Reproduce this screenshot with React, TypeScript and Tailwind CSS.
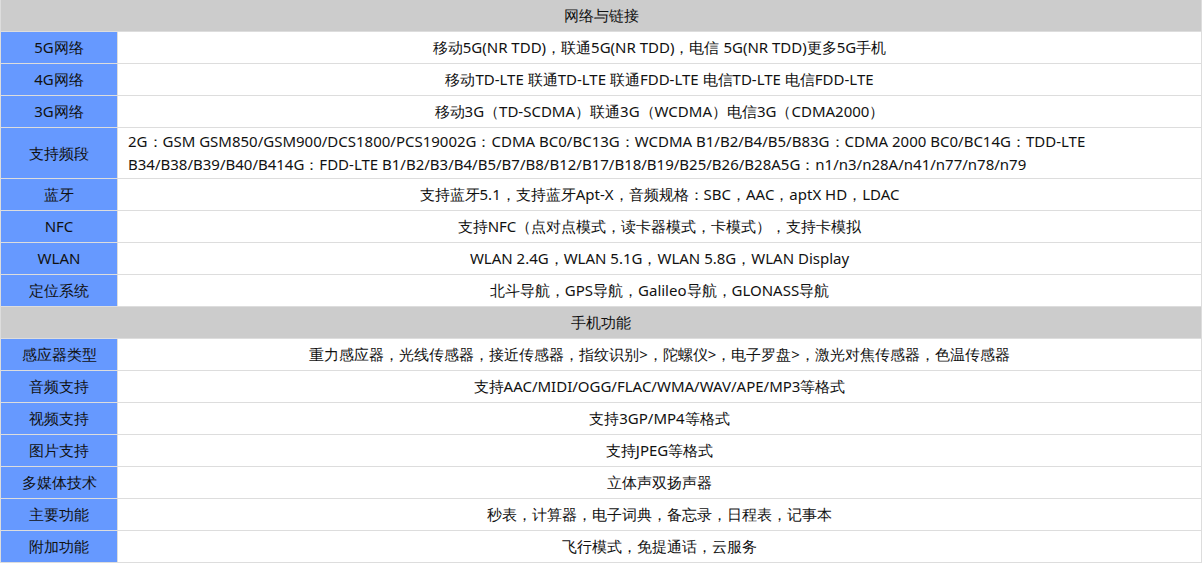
const sec1: [string, string][] = [
  ["5G网络", "移动5G(NR TDD)，联通5G(NR TDD)，电信 5G(NR TDD)更多5G手机"],
  ["4G网络", "移动TD-LTE 联通TD-LTE 联通FDD-LTE 电信TD-LTE 电信FDD-LTE"],
  ["3G网络", "移动3G（TD-SCDMA）联通3G（WCDMA）电信3G（CDMA2000）"],
  [
    "支持频段",
    "2G：GSM GSM850/GSM900/DCS1800/PCS19002G：CDMA BC0/BC13G：WCDMA B1/B2/B4/B5/B83G：CDMA 2000 BC0/BC14G：TDD-LTE B34/B38/B39/B40/B414G：FDD-LTE B1/B2/B3/B4/B5/B7/B8/B12/B17/B18/B19/B25/B26/B28A5G：n1/n3/n28A/n41/n77/n78/n79",
  ],
  ["蓝牙", "支持蓝牙5.1，支持蓝牙Apt-X，音频规格：SBC，AAC，aptX HD，LDAC"],
  ["NFC", "支持NFC（点对点模式，读卡器模式，卡模式），支持卡模拟"],
  ["WLAN", "WLAN 2.4G，WLAN 5.1G，WLAN 5.8G，WLAN Display"],
  ["定位系统", "北斗导航，GPS导航，Galileo导航，GLONASS导航"],
];
const sec2: [string, string][] = [
  ["感应器类型", "重力感应器，光线传感器，接近传感器，指纹识别>，陀螺仪>，电子罗盘>，激光对焦传感器，色温传感器"],
  ["音频支持", "支持AAC/MIDI/OGG/FLAC/WMA/WAV/APE/MP3等格式"],
  ["视频支持", "支持3GP/MP4等格式"],
  ["图片支持", "支持JPEG等格式"],
  ["多媒体技术", "立体声双扬声器"],
  ["主要功能", "秒表，计算器，电子词典，备忘录，日程表，记事本"],
  ["附加功能", "飞行模式，免提通话，云服务"],
];

function Rows({ rows }: { rows: [string, string][] }) {
  return (
    <>
      {rows.map(([k, v]) => (
        <tr key={k}>
          <td className="h-[32px] w-[117px] border border-[#dddddd] bg-[#6699ff] text-center">{k}</td>
          <td
            className={`border border-[#dddddd] px-[10px] ${v.length > 100 ? "text-left py-[2px] leading-[23px]" : "text-center"}`}
          >
            {v}
          </td>
        </tr>
      ))}
    </>
  );
}

function Head({ title }: { title: string }) {
  return (
    <tr>
      <td colSpan={2} className="h-[32px] border border-[#dddddd] bg-[#cccccc] text-center">
        {title}
      </td>
    </tr>
  );
}

export default function App() {
  return (
    <div className="w-[1202px] h-[564px] overflow-hidden bg-white text-[15px] text-[#111] font-['Microsoft_YaHei','Noto_Sans_CJK_SC',sans-serif]">
      <table className="w-full border-collapse -mt-px">
        <tbody>
          <Head title="网络与链接" />
          <Rows rows={sec1} />
          <Head title="手机功能" />
          <Rows rows={sec2} />
        </tbody>
      </table>
    </div>
  );
}
